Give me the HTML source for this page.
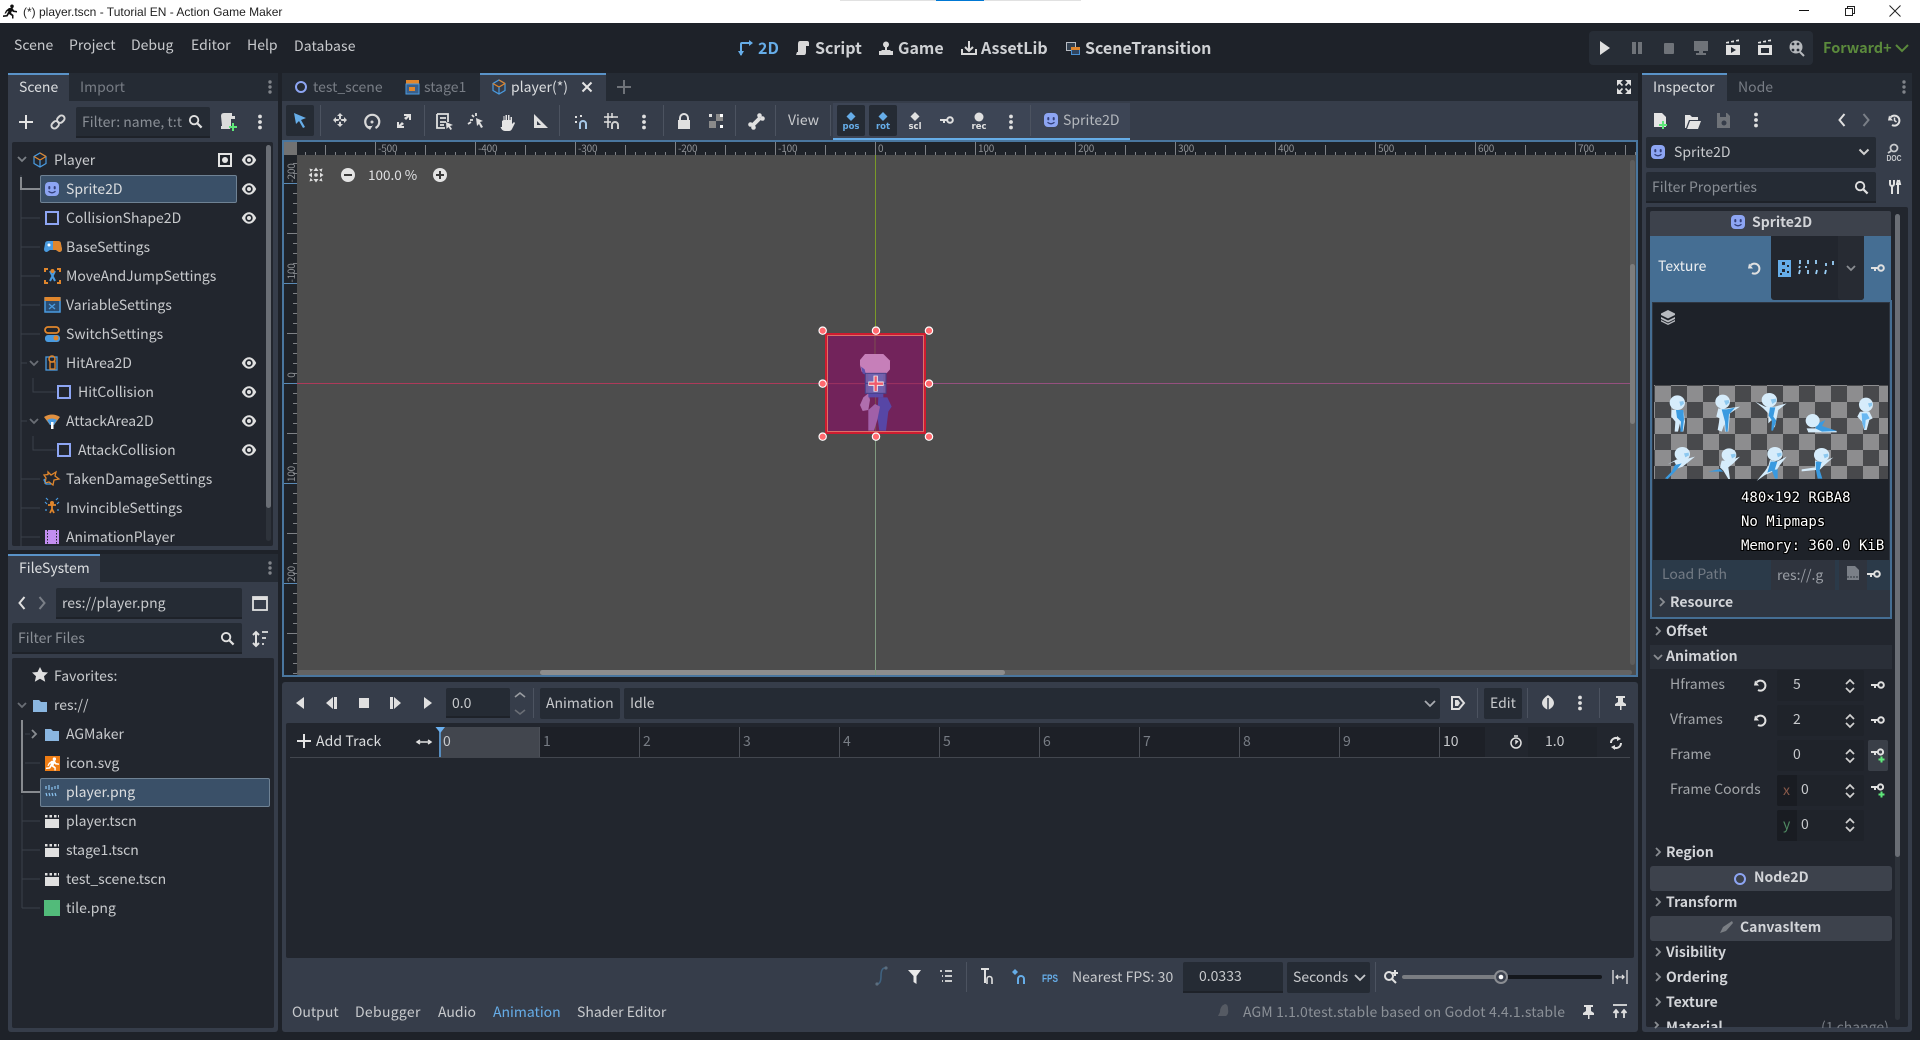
<!DOCTYPE html>
<html><head><meta charset="utf-8"><title>player.tscn - Action Game Maker</title>
<style>
html,body{margin:0;padding:0;background:#1e2229;overflow:hidden}
#r{position:relative;width:1920px;height:1040px;overflow:hidden;background:#1e2229;font-family:"Noto Sans CJK JP","Liberation Sans",sans-serif;font-size:14px;color:#c8cacd}
.b{position:absolute}
.t{position:absolute;white-space:nowrap;line-height:20px;height:20px}
.d{color:#787d85}
.w{color:#dcdee0}
.g{font-weight:700;color:#d2d4d8}
.m{font-weight:700;font-size:16px;color:#cfd1d4}
.rl{position:absolute;top:142px;font-size:10px;line-height:12px;color:#8f9296;white-space:nowrap;letter-spacing:-.2px}
.vl{position:absolute;left:281px;width:20px;text-align:center;font-size:10px;line-height:12px;color:#8f9296;transform:rotate(-90deg);letter-spacing:-.2px}
.i{background:#252b34;border-radius:2px}
.u{background:#252b34;border-bottom:2px solid #1e2229;box-sizing:border-box;border-radius:2px 2px 0 0}
.sep{position:absolute;width:1px;background:#4c5360}
.mono{position:absolute;left:1741px;white-space:nowrap;font-family:"DejaVu Sans Mono","Liberation Mono",monospace;font-size:14px;line-height:20px;color:#fff;text-shadow:1px 0 #000,-1px 0 #000,0 1px #000,0 -1px #000,1px 1px #000,-1px -1px #000,1px -1px #000,-1px 1px #000}
svg{position:absolute;left:0;top:0}
</style></head><body><div id="r">

<!-- title bar -->
<div class="b" style="left:0;top:0;width:1920px;height:23px;background:#fff"></div>
<div class="b" style="left:840px;top:0;width:241px;height:1px;background:#e1e1e1"></div>
<div class="b" style="left:936px;top:0;width:48px;height:1px;background:#0078d4"></div>
<div class="t" style="left:23px;top:2px;font:12px/20px 'Liberation Sans',sans-serif;color:#222">(*) player.tscn - Tutorial EN - Action Game Maker</div>

<!-- menu -->
<div class="t" style="left:14px;top:35px">Scene</div>
<div class="t" style="left:69px;top:35px">Project</div>
<div class="t" style="left:131px;top:35px">Debug</div>
<div class="t" style="left:191px;top:35px">Editor</div>
<div class="t" style="left:247px;top:35px">Help</div>
<div class="t" style="left:294px;top:36px;letter-spacing:.1px">Database</div>

<div class="t m" style="left:758px;top:37px;color:#66ade8">2D</div>
<div class="t m" style="left:815px;top:37px">Script</div>
<div class="t m" style="left:898px;top:37px">Game</div>
<div class="t m" style="left:981px;top:37px">AssetLib</div>
<div class="t m" style="left:1085px;top:37px">SceneTransition</div>

<div class="b" style="left:1589px;top:31px;width:224px;height:34px;background:#272d36;border-radius:4px"></div>
<div class="t" style="left:1823px;top:38px;font-weight:700;font-size:14.5px;color:#5b8a3c">Forward+</div>

<!-- left dock top -->
<div class="b" style="left:8px;top:73px;width:270px;height:28px;background:#252b34"></div>
<div class="b" style="left:8px;top:73px;width:61px;height:28px;background:#363d4a;border-top:2px solid #5a93c8;box-sizing:border-box"></div>
<div class="t w" style="left:19px;top:77px">Scene</div>
<div class="t d" style="left:80px;top:77px">Import</div>
<div class="b" style="left:8px;top:101px;width:270px;height:449px;background:#363d4a"></div>
<div class="b u" style="left:76px;top:107px;width:134px;height:31px"></div>
<div class="t" style="left:82px;top:112px;color:#8a8f96;width:100px;overflow:hidden">Filter: name, t:t</div>
<div class="b" style="left:12px;top:142px;width:261px;height:404px;background:#22262e;border-radius:2px"></div>
<div class="b" style="left:40px;top:175px;width:197px;height:28px;background:#3a5068;border:1px solid #6f8294;box-sizing:border-box;border-radius:2px"></div>
<div class="t" style="left:54px;top:150px">Player</div>
<div class="t w" style="left:66px;top:179px">Sprite2D</div>
<div class="t" style="left:66px;top:208px">CollisionShape2D</div>
<div class="t" style="left:66px;top:237px">BaseSettings</div>
<div class="t" style="left:66px;top:266px;letter-spacing:-.05px">MoveAndJumpSettings</div>
<div class="t" style="left:66px;top:295px">VariableSettings</div>
<div class="t" style="left:66px;top:324px">SwitchSettings</div>
<div class="t" style="left:66px;top:353px">HitArea2D</div>
<div class="t" style="left:78px;top:382px">HitCollision</div>
<div class="t" style="left:66px;top:411px">AttackArea2D</div>
<div class="t" style="left:78px;top:440px">AttackCollision</div>
<div class="t" style="left:66px;top:469px;letter-spacing:.05px">TakenDamageSettings</div>
<div class="t" style="left:66px;top:498px">InvincibleSettings</div>
<div class="t" style="left:66px;top:527px;height:18px;overflow:hidden">AnimationPlayer</div>
<div class="b" style="left:266px;top:145px;width:5px;height:396px;background:#2e333b;border-radius:3px"></div>
<div class="b" style="left:266px;top:145px;width:5px;height:363px;background:#6a6e75;border-radius:3px"></div>

<!-- left dock bottom -->
<div class="b" style="left:8px;top:554px;width:270px;height:28px;background:#252b34"></div>
<div class="b" style="left:8px;top:554px;width:92px;height:28px;background:#363d4a;border-top:2px solid #5a93c8;box-sizing:border-box"></div>
<div class="t w" style="left:19px;top:558px">FileSystem</div>
<div class="b" style="left:8px;top:582px;width:270px;height:450px;background:#363d4a;border-radius:0 0 3px 3px"></div>
<div class="b u" style="left:56px;top:588px;width:186px;height:31px"></div>
<div class="t" style="left:62px;top:593px">res://player.png</div>
<div class="b u" style="left:12px;top:623px;width:230px;height:31px"></div>
<div class="t" style="left:18px;top:628px;color:#8a8f96">Filter Files</div>
<div class="b" style="left:12px;top:658px;width:262px;height:370px;background:#22262e;border-radius:2px"></div>
<div class="b" style="left:40px;top:778px;width:230px;height:29px;background:#3a5068;border:1px solid #6f8294;box-sizing:border-box;border-radius:2px"></div>
<div class="t" style="left:54px;top:666px">Favorites:</div>
<div class="t" style="left:54px;top:695px">res://</div>
<div class="t" style="left:66px;top:724px">AGMaker</div>
<div class="t" style="left:66px;top:753px">icon.svg</div>
<div class="t w" style="left:66px;top:782px">player.png</div>
<div class="t" style="left:66px;top:811px">player.tscn</div>
<div class="t" style="left:66px;top:840px">stage1.tscn</div>
<div class="t" style="left:66px;top:869px">test_scene.tscn</div>
<div class="t" style="left:66px;top:898px">tile.png</div>

<!-- center: tabs -->
<div class="b" style="left:282px;top:73px;width:1356px;height:28px;background:#252b34"></div>
<div class="b" style="left:480px;top:73px;width:126px;height:28px;background:#363d4a;border-top:2px solid #5a93c8;box-sizing:border-box"></div>
<div class="t d" style="left:313px;top:77px">test_scene</div>
<div class="t d" style="left:424px;top:77px">stage1</div>
<div class="t w" style="left:511px;top:77px">player(*)</div>

<!-- 2D toolbar -->
<div class="b" style="left:282px;top:101px;width:1356px;height:41px;background:#363d4a"></div>
<div class="b" style="left:286px;top:105px;width:28px;height:31px;background:#252b34;border-radius:2px"></div>
<div class="sep" style="left:320px;top:105px;height:31px"></div>
<div class="sep" style="left:424px;top:105px;height:31px"></div>
<div class="sep" style="left:559px;top:105px;height:31px"></div>
<div class="sep" style="left:663px;top:105px;height:31px"></div>
<div class="sep" style="left:735px;top:105px;height:31px"></div>
<div class="sep" style="left:775px;top:105px;height:31px"></div>
<div class="t" style="left:788px;top:110px">View</div>
<div class="sep" style="left:830px;top:105px;height:31px"></div>
<div class="b" style="left:833px;top:103px;width:297px;height:35px;background:#3d4555"></div>
<div class="b" style="left:833px;top:138px;width:297px;height:2px;background:#66ade8"></div>
<div class="b" style="left:837px;top:105px;width:28px;height:31px;background:#252b34;border-radius:2px"></div>
<div class="b" style="left:869px;top:105px;width:28px;height:31px;background:#252b34;border-radius:2px"></div>
<div class="sep" style="left:1030px;top:105px;height:31px"></div>
<div class="t" style="left:1063px;top:110px;color:#b4b8bd">Sprite2D</div>

<!-- viewport -->
<div class="b" style="left:282px;top:140px;width:1356px;height:537px;border:2px solid #4a769e;box-sizing:border-box;background:#1f2329"></div>
<div class="b" style="left:284px;top:142px;width:13px;height:13px;background:#727272"></div>
<div class="b" style="left:297px;top:155px;width:1339px;height:520px;background:#4d4d4d"></div>
<div class="b" style="left:297px;top:152px;width:1339px;height:3px;background:linear-gradient(90deg,#7d8085 1px,transparent 1px) 8px 0/10px 100%"></div>
<div class="b" style="left:297px;top:145px;width:1339px;height:10px;background:linear-gradient(90deg,#7d8085 1px,transparent 1px) 28px 0/100px 100%"></div>
<div class="b" style="left:297px;top:142px;width:1339px;height:13px;background:linear-gradient(90deg,#7d8085 1px,transparent 1px) 78px 0/100px 100%"></div>
<div class="b" style="left:293px;top:155px;width:4px;height:520px;background:linear-gradient(#7d8085 1px,transparent 1px) 0 8px/100% 10px"></div>
<div class="b" style="left:287px;top:155px;width:10px;height:520px;background:linear-gradient(#7d8085 1px,transparent 1px) 0 78px/100% 100px"></div>
<div class="b" style="left:284px;top:155px;width:13px;height:520px;background:linear-gradient(#5a8ab5 1px,transparent 1px) 0 28px/100% 100px"></div>
<span class="rl" style="left:378px">-500</span><span class="rl" style="left:478px">-400</span><span class="rl" style="left:578px">-300</span><span class="rl" style="left:678px">-200</span><span class="rl" style="left:778px">-100</span><span class="rl" style="left:878px">0</span><span class="rl" style="left:978px">100</span><span class="rl" style="left:1078px">200</span><span class="rl" style="left:1178px">300</span><span class="rl" style="left:1278px">400</span><span class="rl" style="left:1378px">500</span><span class="rl" style="left:1478px">600</span><span class="rl" style="left:1578px">700</span>
<div class="vl" style="top:167px">-200</div><div class="vl" style="top:267px">-100</div><div class="vl" style="top:369px">0</div><div class="vl" style="top:468px">100</div><div class="vl" style="top:568px">200</div>
<div class="t" style="left:368px;top:164px;color:#dfe0e2;font-size:13.500px">100.0 %</div>
<!-- scrollbars -->
<div class="b" style="left:297px;top:670px;width:1335px;height:5px;background:#636363;border-radius:3px"></div>
<div class="b" style="left:540px;top:670px;width:465px;height:5px;background:#8d8d8d;border-radius:3px"></div>
<div class="b" style="left:1630px;top:160px;width:5px;height:505px;background:#5d5d5d;border-radius:3px"></div>
<div class="b" style="left:1630px;top:264px;width:5px;height:160px;background:#7d7d7d;border-radius:3px"></div>

<!-- bottom panel -->
<div class="b" style="left:282px;top:682px;width:1356px;height:350px;background:#363d4a;border-radius:3px"></div>
<div class="b u" style="left:446px;top:688px;width:64px;height:30px"></div>
<div class="t" style="left:452px;top:693px">0.0</div>
<div class="sep" style="left:533px;top:688px;height:30px"></div>
<div class="b i" style="left:540px;top:688px;width:80px;height:31px"></div>
<div class="t" style="left:546px;top:693px">Animation</div>
<div class="b i" style="left:624px;top:688px;width:816px;height:31px"></div>
<div class="t" style="left:630px;top:693px">Idle</div>
<div class="sep" style="left:1477px;top:688px;height:30px"></div>
<div class="b i" style="left:1484px;top:688px;width:38px;height:31px"></div>
<div class="t" style="left:1490px;top:693px">Edit</div>
<div class="sep" style="left:1527px;top:688px;height:30px"></div>
<div class="sep" style="left:1599px;top:688px;height:30px"></div>

<div class="b" style="left:286px;top:723px;width:1348px;height:235px;background:#22262e;border-radius:2px"></div>
<div class="b" style="left:440px;top:727px;width:1045px;height:30px;background:#1d2027"></div>
<div class="b" style="left:441px;top:727px;width:99px;height:30px;background:#42464e"></div>
<div class="b" style="left:1528px;top:727px;width:69px;height:30px;background:#1f232a"></div>
<div class="b" style="left:290px;top:757px;width:1340px;height:1px;background:#42464e"></div>
<div class="b" style="left:539px;top:727px;width:901px;height:30px;background:linear-gradient(90deg,#4c5058 1px,transparent 1px) 0 0/100px 100%"></div>
<div class="t w" style="left:316px;top:731px;letter-spacing:.1px">Add Track</div>
<div class="t" style="left:443px;top:731px">0</div>
<div class="t d" style="left:543px;top:731px">1</div>
<div class="t d" style="left:643px;top:731px">2</div>
<div class="t d" style="left:743px;top:731px">3</div>
<div class="t d" style="left:843px;top:731px">4</div>
<div class="t d" style="left:943px;top:731px">5</div>
<div class="t d" style="left:1043px;top:731px">6</div>
<div class="t d" style="left:1143px;top:731px">7</div>
<div class="t d" style="left:1243px;top:731px">8</div>
<div class="t d" style="left:1343px;top:731px">9</div>
<div class="t" style="left:1443px;top:731px">10</div>
<div class="t" style="left:1545px;top:731px">1.0</div>

<div class="sep" style="left:966px;top:962px;height:30px"></div>
<div class="t" style="left:1072px;top:967px;letter-spacing:.05px">Nearest FPS: 30</div>
<div class="b u" style="left:1183px;top:962px;width:100px;height:31px"></div>
<div class="t" style="left:1199px;top:966px">0.0333</div>
<div class="b i" style="left:1287px;top:962px;width:83px;height:31px"></div>
<div class="t" style="left:1293px;top:967px">Seconds</div>
<div class="sep" style="left:1375px;top:962px;height:30px"></div>
<div class="b" style="left:1402px;top:975px;width:200px;height:4px;background:#14171c;border-radius:2px"></div>
<div class="b" style="left:1402px;top:975px;width:99px;height:4px;background:#7a7d82;border-radius:2px"></div>

<div class="t" style="left:292px;top:1002px">Output</div>
<div class="t" style="left:355px;top:1002px;letter-spacing:.3px">Debugger</div>
<div class="t" style="left:438px;top:1002px">Audio</div>
<div class="t" style="left:493px;top:1002px;color:#66ade8">Animation</div>
<div class="t" style="left:577px;top:1002px">Shader Editor</div>
<div class="t" style="left:1243px;top:1002px;color:#8b9097;letter-spacing:.15px">AGM 1.1.0test.stable based on Godot 4.4.1.stable</div>

<!-- Right dock -->
<div class="b" style="left:1642px;top:73px;width:270px;height:28px;background:#252b34"></div>
<div class="b" style="left:1642px;top:73px;width:85px;height:28px;background:#363d4a;border-top:2px solid #5a93c8;box-sizing:border-box"></div>
<div class="t w" style="left:1653px;top:77px">Inspector</div>
<div class="t d" style="left:1738px;top:77px">Node</div>
<div class="b" style="left:1642px;top:101px;width:270px;height:931px;background:#363d4a;border-radius:0 0 3px 3px"></div>
<div class="b i" style="left:1646px;top:137px;width:230px;height:31px"></div>
<div class="t" style="left:1674px;top:142px">Sprite2D</div>
<div class="b u" style="left:1646px;top:172px;width:230px;height:31px"></div>
<div class="t" style="left:1652px;top:177px;color:#8a8f96">Filter Properties</div>
<div class="b" style="left:1646px;top:207px;width:262px;height:820px;background:#22262e;border-radius:2px"></div>

<div class="b" style="left:1650px;top:211px;width:241px;height:25px;background:#3d424c;border-radius:2px 2px 0 0"></div>
<div class="t g" style="left:1752px;top:212px">Sprite2D</div>
<div class="b" style="left:1650px;top:236px;width:241px;height:64px;background:#456e93"></div>
<div class="t" style="left:1658px;top:256px;color:#eef0f2">Texture</div>
<div class="b" style="left:1771px;top:236px;width:93px;height:64px;background:#22262e;border-radius:0 0 3px 3px"></div>
<div class="b" style="left:1838px;top:236px;width:26px;height:64px;background:#272b33;border-radius:0 0 3px 3px"></div>

<div class="b" style="left:1650px;top:300px;width:242px;height:319px;border:2px solid #456e93;box-sizing:border-box;background:#2f3641"></div>
<div class="b" style="left:1653px;top:303px;width:236px;height:257px;background:#1e2229"></div>
<div class="b" style="left:1654px;top:385px;width:234px;height:94px;background:conic-gradient(#48494c 25%,#8d8d8f 0 50%,#48494c 0 75%,#8d8d8f 0) 1px 1px/32px 32px"></div>
<div class="mono" style="top:488px">480×192 RGBA8</div>
<div class="mono" style="top:512px">No Mipmaps</div>
<div class="mono" style="top:536px">Memory: 360.0 KiB</div>
<div class="b" style="left:1652px;top:560px;width:238px;height:30px;background:#2b3a49"></div>
<div class="t" style="left:1662px;top:564px;color:#727a84">Load Path</div>
<div class="b" style="left:1771px;top:560px;width:64px;height:30px;background:#2f343e"></div>
<div class="b" style="left:1839px;top:560px;width:28px;height:30px;background:#2f343e"></div>
<div class="t" style="left:1777px;top:565px;color:#9a9ea5">res://.g</div>
<div class="t g" style="left:1670px;top:592px">Resource</div>

<div class="t g" style="left:1666px;top:621px">Offset</div>
<div class="b" style="left:1650px;top:645px;width:242px;height:24px;background:#2a2f38"></div>
<div class="t g" style="left:1666px;top:646px">Animation</div>
<div class="t" style="left:1670px;top:674px;color:#a3a6aa">Hframes</div>
<div class="b i" style="left:1777px;top:670px;width:87px;height:31px;background:#1f232a"></div>
<div class="t" style="left:1793px;top:674px">5</div>
<div class="t" style="left:1670px;top:709px;color:#a3a6aa">Vframes</div>
<div class="b i" style="left:1777px;top:705px;width:87px;height:31px;background:#1f232a"></div>
<div class="t" style="left:1793px;top:709px">2</div>
<div class="t" style="left:1670px;top:744px;color:#a3a6aa">Frame</div>
<div class="b i" style="left:1777px;top:740px;width:87px;height:31px;background:#1f232a"></div>
<div class="t" style="left:1793px;top:744px">0</div>
<div class="b" style="left:1868px;top:740px;width:20px;height:31px;background:#3a3f48;border-radius:2px"></div>
<div class="t" style="left:1670px;top:779px;color:#a3a6aa">Frame Coords</div>
<div class="b i" style="left:1777px;top:775px;width:87px;height:31px;background:#1f232a"></div>
<div class="b" style="left:1777px;top:775px;width:20px;height:31px;background:#191c22;border-radius:2px 0 0 2px"></div>
<div class="t" style="left:1783px;top:780px;color:#8a5a4a">x</div>
<div class="t" style="left:1801px;top:779px">0</div>
<div class="b i" style="left:1777px;top:810px;width:87px;height:31px;background:#1f232a"></div>
<div class="b" style="left:1777px;top:810px;width:20px;height:31px;background:#191c22;border-radius:2px 0 0 2px"></div>
<div class="t" style="left:1783px;top:814px;color:#4f8a62">y</div>
<div class="t" style="left:1801px;top:814px">0</div>
<div class="t g" style="left:1666px;top:842px">Region</div>
<div class="b" style="left:1650px;top:866px;width:242px;height:25px;background:#3d424c;border-radius:3px"></div>
<div class="t g" style="left:1754px;top:867px">Node2D</div>
<div class="t g" style="left:1666px;top:892px">Transform</div>
<div class="b" style="left:1650px;top:916px;width:242px;height:25px;background:#3d424c;border-radius:3px"></div>
<div class="t g" style="left:1740px;top:917px">CanvasItem</div>
<div class="t g" style="left:1666px;top:942px">Visibility</div>
<div class="t g" style="left:1666px;top:967px">Ordering</div>
<div class="t g" style="left:1666px;top:992px">Texture</div>
<div class="t g" style="left:1666px;top:1017px;height:11px;overflow:hidden">Material</div>
<div class="t d" style="left:1821px;top:1017px;height:11px;overflow:hidden">(1 change)</div>
<div class="b" style="left:1895px;top:214px;width:5px;height:806px;background:#2e333b;border-radius:3px"></div>
<div class="b" style="left:1895px;top:214px;width:5px;height:643px;background:#6a6e75;border-radius:3px"></div>

<!-- icons overlay -->
<svg width="1920" height="1040" viewBox="0 0 1920 1040" xmlns="http://www.w3.org/2000/svg">
<defs>
<symbol id="eye" viewBox="0 0 16 16"><path d="M.8 8C3 3.800 5.500 2.300 8 2.300S13 3.800 15.200 8C13 12.200 10.500 13.700 8 13.700S3 12.200.8 8zM8 4.300a3.700 3.700 0 1 0 0 7.400 3.700 3.700 0 0 0 0-7.400z" fill="#e0e0e0" fill-rule="evenodd"/><circle cx="8" cy="8" r="2" fill="#e0e0e0"/></symbol>
<symbol id="spr" viewBox="0 0 16 16"><rect x="1" y="1" width="14" height="14" rx="4" fill="#8da5f3"/><rect x="4.300" y="5" width="2" height="3.400" rx="1" fill="#33407a"/><rect x="9.700" y="5" width="2" height="3.400" rx="1" fill="#33407a"/><path d="M4.500 10.300q3.500 3 7 0" fill="none" stroke="#33407a" stroke-width="1.300"/></symbol>
<symbol id="col" viewBox="0 0 16 16"><rect x="2" y="2" width="12" height="12" fill="none" stroke="#8da5f3" stroke-width="2"/></symbol>
<symbol id="cube" viewBox="0 0 16 16"><path d="M8 1l6 3.500v7L8 15 2 11.500v-7z" fill="none" stroke="#4a9be0" stroke-width="1.200"/><path d="M2 4.500L8 8l6-3.500M8 1l6 3.500" fill="none" stroke="#e0862c" stroke-width="1.200"/><path d="M8 8v7" stroke="#4a9be0" stroke-width="1.200"/></symbol>
<symbol id="key" viewBox="0 0 16 16"><circle cx="11" cy="8" r="2.800" fill="none" stroke="#e0e0e0" stroke-width="2"/><path d="M1 7h7v2H6v2H4V9H1z" fill="#e0e0e0"/></symbol>
<symbol id="keyp" viewBox="0 0 16 16"><circle cx="10.500" cy="5" r="2.600" fill="none" stroke="#e0e0e0" stroke-width="2"/><path d="M1 4h7v2H6v2H4V6H1z" fill="#e0e0e0"/><path d="M10.500 9.500h2v2h2v2h-2v2h-2v-2h-2v-2h2z" fill="#5fe87a"/></symbol>
<symbol id="rev" viewBox="0 0 16 16"><path d="M4.600 5.400A5 5 0 1 1 6 13" fill="none" stroke="#e0e0e0" stroke-width="2"/><path d="M2 8.500h5L3 3.500z" fill="#e0e0e0"/></symbol>
<symbol id="hist" viewBox="0 0 16 16"><path d="M4.600 5.400A5 5 0 1 1 6 13" fill="none" stroke="#e0e0e0" stroke-width="2"/><path d="M2 8.500h5L3 3.500z" fill="#e0e0e0"/><path d="M8.500 5.500V8.500l2 1.500" fill="none" stroke="#e0e0e0" stroke-width="1.500"/></symbol>
<symbol id="ud" viewBox="0 0 16 16"><path d="M4 6l4-4 4 4M4 10l4 4 4-4" fill="none" stroke="#d0d0d0" stroke-width="1.700"/></symbol>
<symbol id="cd" viewBox="0 0 16 16"><path d="M3.500 5.500L8 10l4.500-4.500" fill="none" stroke="#d0d0d0" stroke-width="2"/></symbol>
<symbol id="cr" viewBox="0 0 16 16"><path d="M6 4l4 4-4 4" fill="none" stroke="#8a8d92" stroke-width="1.800"/></symbol>
<symbol id="dots" viewBox="0 0 16 16"><circle cx="8" cy="2.500" r="1.900" fill="#e0e0e0"/><circle cx="8" cy="8" r="1.900" fill="#e0e0e0"/><circle cx="8" cy="13.500" r="1.900" fill="#e0e0e0"/></symbol>
<symbol id="dotsd" viewBox="0 0 16 16"><circle cx="8" cy="3" r="1.700" fill="#80848a"/><circle cx="8" cy="8" r="1.700" fill="#80848a"/><circle cx="8" cy="13" r="1.700" fill="#80848a"/></symbol>
<symbol id="mag" viewBox="0 0 16 16"><circle cx="6.500" cy="6.500" r="4.500" fill="none" stroke="#e0e0e0" stroke-width="2"/><path d="M10 10l4.500 4.500" stroke="#e0e0e0" stroke-width="2.400"/></symbol>
<symbol id="plus" viewBox="0 0 16 16"><path d="M7 1h2v6h6v2H9v6H7V9H1V7h6z" fill="#e4e4e4"/></symbol>
<symbol id="fold" viewBox="0 0 16 16"><path d="M1 2h6l2 2h6v10H1z" fill="#8ab6e0"/></symbol>
<symbol id="clap" viewBox="0 0 16 16"><path d="M1 6h14v9H1z" fill="#e0e0e0"/><path d="M1 2h2.500v2.500H1zM5.500 2H8v2.500H5.500zM10 2h2.500v2.500H10zM14 2h1v2.500h-1z" fill="#e0e0e0"/></symbol>
<symbol id="lt" viewBox="0 0 16 16"><path d="M10.500 2L5.500 8l5 6" fill="none" stroke="#e0e0e0" stroke-width="2"/></symbol>
<symbol id="gt" viewBox="0 0 16 16"><path d="M5.500 2l5 6-5 6" fill="none" stroke="#7a7f87" stroke-width="2"/></symbol>
<symbol id="run" viewBox="0 0 16 16"><path d="M10 1.500a1.800 1.800 0 1 1 0 3.600 1.800 1.800 0 0 1 0-3.600zM7 5h3.500l1.500 2.500 3 .5v1.500l-4-.5-1-1-1 2 2.500 2v3.500H10V13L7 11l-1.500 2.500L1 14v-1.600l3.500-.4L6.500 8 5 8.500 4 10.500H2.500L4 7.500z"/></symbol>
</defs>

<!-- titlebar icons -->
<use href="#run" x="2" y="3" width="16" height="16" fill="#111"/>
<path d="M1799 10.500h10" stroke="#111"/>
<path d="M1845.500 8.500h7v7h-7zM1847.500 8.500v-2h7v7h-2" fill="none" stroke="#222"/>
<path d="M1889.500 5.500l11 11M1900.500 5.500l-11 11" stroke="#222"/>

<!-- workspace icons -->
<path d="M741 55V44q0-1 1-1h8" fill="none" stroke="#66ade8" stroke-width="2"/><path d="M738 51h6l-3 5zM749 40v6l4-3z" fill="#66ade8"/>
<path d="M798 44q0-3 2-3h6v11q0 3-2 3h-8l1-3h1zM806 41h1q2 0 2 2v3h-3z" fill="#d8d8d8"/>
<circle cx="886" cy="44.500" r="3" fill="#d8d8d8"/><path d="M885 46h2v4h3l1 1h2v4h-14v-4h2l1-1h3z" fill="#d8d8d8"/>
<path d="M969 41v9M965 47l4 4 4-4M962 49v5h14v-5" fill="none" stroke="#d8d8d8" stroke-width="2"/>
<rect x="1066.500" y="42.500" width="9" height="8" fill="#32404f" stroke="#b8bcc2"/><rect x="1071.500" y="47.500" width="8" height="7" fill="#30455f" stroke="#4a8fd0"/><rect x="1071" y="47" width="9" height="3" fill="#e0862c"/>

<!-- run bar -->
<path d="M1600 41l10 7-10 7z" fill="#e0e0e0"/>
<path d="M1632 42h4v12h-4zM1638 42h4v12h-4z" fill="#6f7379"/>
<rect x="1664" y="43" width="10" height="11" rx="1" fill="#6f7379"/>
<path d="M1694 41h14v10h-5v2h3v2h-10v-2h3v-2h-5z" fill="#6f7379"/>
<path d="M1726 45h14v10h-14zM1726 42l3-.6v2h-3zM1731 41l3-.6v2h-3zM1736 40l3-.6v2h-3z" fill="#e0e0e0"/><path d="M1731 47l5 3-5 3z" fill="#252b34"/>
<path d="M1758 45h14v10h-14zM1758 42l3-.6v2h-3zM1763 41l3-.6v2h-3zM1768 40l3-.6v2h-3z" fill="#e0e0e0"/><rect x="1761" y="48" width="8" height="5" fill="#252b34"/>
<circle cx="1796" cy="47" r="6.500" fill="#b5b8bc"/><circle cx="1793" cy="44" r="1.400" fill="#252b34"/><circle cx="1798" cy="44" r="1.400" fill="#252b34"/><circle cx="1793" cy="50" r="1.400" fill="#252b34"/><circle cx="1798" cy="50" r="1.400" fill="#252b34"/><path d="M1800 52l4 4" stroke="#b5b8bc" stroke-width="2"/>
<path d="M1896 45l6 6 6-6" fill="none" stroke="#5b8a3c" stroke-width="2"/>

<!-- left dock top -->
<use href="#dotsd" x="262" y="79" width="16" height="16"/>
<use href="#plus" x="18" y="114" width="16" height="16"/>
<g transform="rotate(-45 58 122)" fill="none" stroke="#d6d6d6" stroke-width="2"><rect x="50" y="119" width="8" height="6" rx="3"/><rect x="58" y="119" width="8" height="6" rx="3"/></g>
<use href="#mag" x="188" y="114" width="15" height="15"/>
<path d="M221 116q0-3 3-3h8v3h3v3h-4v7l-1 3h-9v-3h1z" fill="#dcdcdc"/><path d="M232 123h2v3h3v2h-3v3h-2v-3h-3v-2h3z" fill="#5fe87a"/>
<use href="#dots" x="252" y="114" width="16" height="16"/>
<path d="M21 175V547M21 218h19M21 247h19M21 276h19M21 305h19M21 334h19M21 363h6M21 421h6M21 479h19M21 508h19M21 537h19M33 378v14h23M33 436v14h23" stroke="#3b4049" fill="none"/>
<path d="M21 177v12h19" stroke="#878a8f" stroke-width="2" fill="none"/>
<path d="M18 157l4 4 4-4" fill="none" stroke="#7c8086" stroke-width="1.800"/>
<use href="#cube" x="32" y="152" width="16" height="16"/>
<rect x="218" y="153" width="14" height="14" fill="#e4e4e4"/><rect x="220" y="155" width="10" height="10" fill="#1f232a"/><rect x="222" y="157" width="6" height="6" rx="3" fill="#e4e4e4"/>
<use href="#eye" x="241" y="152" width="16" height="16"/>
<use href="#spr" x="44" y="181" width="16" height="16"/>
<use href="#eye" x="241" y="181" width="16" height="16"/>
<use href="#col" x="44" y="210" width="16" height="16"/>
<use href="#eye" x="241" y="210" width="16" height="16"/>
<!-- BaseSettings -->
<path d="M45 244q0-3 3-3h10q3 0 3 3l1 5q0 3-3 3l-3-2h-6l-3 2q-3 0-3-3z" fill="#4a9be0"/><path d="M53 241h5q3 0 3 3l1 5q0 3-3 3l-3-2h-3z" fill="#e0862c"/><circle cx="49" cy="245" r="1.500" fill="#fff"/>
<!-- MoveAndJump -->
<path d="M44 268h4v2h-2v2h-2zM57 268h4v4h-2v-2h-2zM44 284v-4h2v2h2v2zM61 284h-4v-2h2v-2h2z" fill="#e0862c"/><path d="M50 271l5 10M55 271l-5 10" stroke="#4a9be0" stroke-width="2"/><circle cx="52.500" cy="271" r="2" fill="#e0862c"/>
<!-- Variable -->
<rect x="45" y="298" width="15" height="14" fill="#2a4d72" stroke="#4a9be0" stroke-width="1.500"/><rect x="44.500" y="297" width="16" height="4" fill="#e0862c"/><path d="M49 304l6 5M55 304l-6 5" stroke="#4a9be0" stroke-width="1.300"/>
<!-- Switch -->
<rect x="45" y="327" width="14" height="6" rx="3" fill="none" stroke="#e0862c" stroke-width="1.800"/><rect x="45" y="335" width="15" height="7" rx="3" fill="#4a9be0"/><circle cx="56" cy="338" r="2.500" fill="#e0862c"/>
<!-- HitArea -->
<path d="M30 361l4 4 4-4" fill="none" stroke="#6a6e75" stroke-width="1.800"/>
<rect x="46" y="357" width="11" height="13" fill="none" stroke="#4a9be0" stroke-width="1.300"/><circle cx="52" cy="359" r="3" fill="none" stroke="#e0862c" stroke-width="1.500"/><rect x="50" y="362" width="5" height="7" fill="none" stroke="#e0862c" stroke-width="1.300"/>
<use href="#eye" x="241" y="355" width="16" height="16"/>
<use href="#col" x="56" y="384" width="16" height="16"/>
<use href="#eye" x="241" y="384" width="16" height="16"/>
<path d="M30 419l4 4 4-4" fill="none" stroke="#6a6e75" stroke-width="1.800"/>
<path d="M44 417q8-5 16 0l-6 8h-4z" fill="#e09040"/><path d="M47 420q5-3 10 0l-3 5h-4z" fill="#4a9be0"/><rect x="51" y="422" width="2.500" height="7" fill="#fff"/>
<use href="#eye" x="241" y="413" width="16" height="16"/>
<use href="#col" x="56" y="442" width="16" height="16"/>
<use href="#eye" x="241" y="442" width="16" height="16"/>
<path d="M48 472l3 3 5-3-1 4 4 3-5 1-1 5-4-3-4 1 1-5-2-3 4-.5z" fill="none" stroke="#e0862c" stroke-width="1.300"/><path d="M45 479l-1 1 2 4 5 0" stroke="#4a9be0" fill="none" stroke-width="1.300"/>
<circle cx="52" cy="503" r="2" fill="#e0862c"/><path d="M48 505h8M52 505v4l-2 4M52 509l2 4" stroke="#e0862c" stroke-width="1.800" fill="none"/><path d="M45 502l2 2M59 502l-2 2M45 510h2M57 510h2M46 498l2 2M58 498l-2 2" stroke="#4a9be0" stroke-width="1.200"/>
<rect x="45" y="530" width="14" height="14" fill="#c38ef1"/><path d="M47.500 530v14M56.500 530v14" stroke="#22262e" stroke-width="1" stroke-dasharray="1.500 1.500"/>

<!-- file system -->
<use href="#dotsd" x="262" y="560" width="16" height="16"/>
<use href="#lt" x="14" y="595" width="16" height="16"/>
<use href="#gt" x="34" y="595" width="16" height="16"/>
<rect x="253" y="597" width="14" height="13" fill="none" stroke="#e0e0e0" stroke-width="1.800"/><rect x="253" y="597" width="14" height="3" fill="#e0e0e0"/>
<use href="#mag" x="220" y="631" width="15" height="15"/>
<path d="M256 632v14M253 635l3-3 3 3M253 643l3 3 3-3" fill="none" stroke="#e0e0e0" stroke-width="2"/><path d="M262 632h6M262 638h4M262 644h2" stroke="#e0e0e0" stroke-width="1.800"/>
<path d="M40 667l2.500 5 5.500.5-4 3.700 1.200 5.500-5.200-3-5.200 3 1.200-5.500-4-3.700 5.500-.5z" fill="#e0e0e0"/>
<path d="M18 703l4 4 4-4" fill="none" stroke="#6a6e75" stroke-width="1.800"/>
<use href="#fold" x="32" y="698" width="16" height="16"/>
<path d="M22 795V908M22 821h18M22 850h18M22 879h18M22 908h18M25 734h5M25 763h15" stroke="#3b4049" fill="none"/>
<path d="M22 720v72h18" stroke="#878a8f" stroke-width="2" fill="none"/>
<use href="#cr" x="26" y="726" width="16" height="16"/>
<use href="#fold" x="44" y="727" width="16" height="16"/>
<rect x="45" y="756" width="15" height="15" fill="#ef7d14"/>
<use href="#run" x="45" y="756" width="15" height="15" fill="#fff"/>
<path d="M46 786v3M49 785v5M52 787v3M55 786v3M58 785v4M46 793l1 3M49 793l1 3M52 793l1 3M55 793l1 3" stroke="#8cc4f0" stroke-width="1.200"/>
<use href="#clap" x="44" y="813" width="16" height="16"/>
<use href="#clap" x="44" y="842" width="16" height="16"/>
<use href="#clap" x="44" y="871" width="16" height="16"/>
<rect x="44" y="900" width="16" height="16" fill="#52bb7a"/>

<!-- center tabs -->
<circle cx="301" cy="87" r="5" fill="none" stroke="#8da5f3" stroke-width="2"/>
<rect x="406" y="84" width="13" height="10" fill="#3a5f8a" stroke="#4a9be0"/><rect x="406" y="80" width="13" height="3.500" fill="#e0862c"/><rect x="409" y="87" width="6" height="4" fill="#e0862c"/>
<use href="#cube" x="491" y="79" width="16" height="16"/>
<path d="M582.500 82.500l9 9M591.500 82.500l-9 9" stroke="#e4e4e4" stroke-width="2"/>
<path d="M624 80v14M617 87h14" stroke="#6f7379" stroke-width="2"/>
<path d="M1617 80h6l-6 6zM1631 80v6l-6-6zM1617 94v-6l6 6zM1631 94h-6l6-6z" fill="#e0e0e0"/>
<path d="M1619 82l3.500 3.500M1629 82l-3.500 3.500M1619 92l3.500-3.500M1629 92l-3.500-3.500" stroke="#e0e0e0" stroke-width="1.600"/>

<!-- 2D toolbar icons -->
<path d="M294 113l12 5-5 2 4 7-2 1-4-7-3 3z" fill="#66ade8"/>
<path d="M340 113l3 3h-2v3h3v-2l3 3-3 3v-2h-3v3h2l-3 3-3-3h2v-3h-3v2l-3-3 3-3v2h3v-3h-2z" fill="#d8d8d8"/><circle cx="340" cy="120.500" r="1.300" fill="#363d4a"/>
<path d="M369 128a7 7 0 1 1 6.500 0" fill="none" stroke="#d8d8d8" stroke-width="2.200"/><path d="M366 126h7v-1l-3 5z" fill="#d8d8d8"/><circle cx="372" cy="122" r="1.500" fill="#d8d8d8"/>
<path d="M404 114h7v6h-2v-3l-3 3-2-2 3-2h-3zM404 128h-7v-6h2v3l3-3 2 2-3 2h3z" fill="#e0e0e0"/>
<path d="M437 114h11v8M437 114v14h8M440 118h6M440 122h6M440 125h4" fill="none" stroke="#e0e0e0" stroke-width="1.800"/><path d="M446 122l7 3-3 1 2 3-1.500 1-2-3-2 2z" fill="#e0e0e0"/>
<path d="M476 113v3M470 120h3M472 115l2 2M468 124l3-2" stroke="#e0e0e0" stroke-width="1.800"/><path d="M476 118l7 3-3 1 3 5-2 1-2-4-2 2z" fill="#e0e0e0"/>
<path d="M502 127v-6l1.500-1v-4h1v4h1v-5h1.500v5h1v-5h1.500v5h1v-3h1.500v7l2-2 1 1-3 6q-1 2-3 2h-4q-3 0-4.500-4z" fill="#e4e4e4"/>
<path d="M534 114l14 14h-14zM537 121v4h4z" fill="#e0e0e0" fill-rule="evenodd"/>
<path d="M576 116v2M576 121v2M581 115v2" stroke="#e0e0e0" stroke-width="2"/><path d="M580 129v-5a3 3 0 0 1 6 0v5" fill="none" stroke="#a6c8e8" stroke-width="2"/>
<path d="M608 113v15M604 117h14M604 122h7M612 113v5" stroke="#e0e0e0" stroke-width="1.500" fill="none"/><path d="M612 129v-4a3 3 0 0 1 6 0v4" fill="none" stroke="#d0d0d0" stroke-width="2"/>
<use href="#dots" x="636" y="114" width="16" height="16"/>
<path d="M680 121v-3a4 4 0 0 1 8 0v3" fill="none" stroke="#e0e0e0" stroke-width="2"/><rect x="678" y="120" width="12" height="9" fill="#e0e0e0"/>
<rect x="709" y="121" width="7" height="7" fill="#8a8a8a"/><rect x="716" y="114" width="7" height="7" fill="#8a8a8a"/><rect x="709" y="114" width="3" height="3" fill="#e0e0e0"/><rect x="720" y="114" width="3" height="3" fill="#fff"/><rect x="720" y="125" width="3" height="3" fill="#fff"/>
<path d="M752 126l8-8" stroke="#e0e0e0" stroke-width="4"/><circle cx="759.500" cy="115.500" r="2.300" fill="#e0e0e0"/><circle cx="762.500" cy="118.500" r="2.300" fill="#e0e0e0"/><circle cx="750.500" cy="124.500" r="2.300" fill="#e0e0e0"/><circle cx="753.500" cy="127.500" r="2.300" fill="#e0e0e0"/>
<g font-family="DejaVu Sans,sans-serif" font-size="8.500" font-weight="700">
<path d="M851 112l4.500 4.500-4.500 4.500-4.500-4.500z" fill="#66ade8"/><text x="851" y="129" fill="#66ade8" text-anchor="middle">pos</text>
<path d="M883 112l4.500 4.500-4.500 4.500-4.500-4.500z" fill="#66ade8"/><text x="883" y="129" fill="#66ade8" text-anchor="middle">rot</text>
<path d="M915 112l4.500 4.500-4.500 4.500-4.500-4.500z" fill="#e0e0e0"/><text x="915" y="129" fill="#e0e0e0" text-anchor="middle">scl</text>
<circle cx="979" cy="117" r="4.500" fill="#e0e0e0"/><text x="979" y="129" fill="#e0e0e0" text-anchor="middle">rec</text></g>
<use href="#key" x="939" y="112" width="16" height="16"/>
<use href="#dots" x="1003" y="114" width="16" height="16"/>
<use href="#spr" x="1043" y="112" width="16" height="16"/>

<!-- canvas overlay -->
<g fill="#e0e0e0"><path d="M316 167.500l2.500 3.500h-5zM316 182.500l2.500-3.500h-5zM308.500 175l3.500-2.500v5zM323.500 175l-3.500-2.500v5z"/><circle cx="316" cy="175" r="1.800"/><path d="M309.500 168.500l3.500 1-2.500 2.500zM322.500 168.500l-3.500 1 2.500 2.500zM309.500 181.500l3.500-1-2.500-2.500zM322.500 181.500l-3.500-1 2.500-2.500z"/></g>
<circle cx="348" cy="175" r="7" fill="#e4e4e4"/><rect x="344" y="174" width="8" height="2" fill="#3a3a3a"/>
<circle cx="440" cy="175" r="7" fill="#e4e4e4"/><path d="M436 174h3v-3h2v3h3v2h-3v3h-2v-3h-3z" fill="#3a3a3a"/>

<!-- axes -->
<path d="M875.500 155V383" stroke="#7a9a28"/><path d="M875.500 383V675" stroke="#7f9a80"/>
<path d="M297 383.500H875" stroke="#ad3a5a"/><path d="M875 383.500H1630" stroke="#95507f"/>

<!-- sprite -->
<g transform="translate(800 310) scale(.3333)">
<rect x="78" y="72" width="297" height="297" fill="#72235b"/>
<path d="M225 72V190M227 250V369" stroke="#8a8a40" stroke-width="2.500" stroke-opacity=".5"/>
<path d="M78 221H200M258 221H375" stroke="#b03a62" stroke-width="3" stroke-opacity=".7"/>
<path d="M235 262H262L275 290L265 305L258 362H238L232 320Z" fill="#5746a6"/>
<path d="M190 262L205 250L210 270L205 300L188 303L180 285Z" fill="#b06eae"/>
<path d="M205 300L225 282L240 290L232 330L222 362H205Z" fill="#a060a8"/>
<path d="M205 190H250V262H205Z" fill="#5a4aa8"/>
<path d="M195 132H250L270 152V178L258 192H200L185 185L180 165V150Z" fill="#c67fb9"/>
<path d="M183 170L194 178L198 195L188 190Z" fill="#5f50aa"/>
<rect x="196" y="190" width="62" height="60" fill="#7767b0" fill-opacity=".85" stroke="#45408a" stroke-width="3"/><path d="M196 220h62" stroke="#45408a" stroke-width="3"/>
<path d="M227 197v48M205 221h46" stroke="#f4e8e8" stroke-width="13"/><path d="M227 199v44M207 221h42" stroke="#f05a6c" stroke-width="7"/>
<rect x="81" y="75" width="291" height="291" fill="none" stroke="#d8736b" stroke-width="6"/>
<rect x="78" y="72" width="297" height="297" fill="none" stroke="#d01c30" stroke-width="6"/>
<g fill="#ff6a6f" stroke="#fff" stroke-width="3.500"><circle cx="68" cy="62" r="11"/><circle cx="228" cy="62" r="11"/><circle cx="387" cy="62" r="11"/><circle cx="68" cy="221" r="11"/><circle cx="387" cy="221" r="11"/><circle cx="68" cy="380" r="11"/><circle cx="228" cy="380" r="11"/><circle cx="387" cy="380" r="11"/></g>
</g>

<!-- animation toolbar -->
<path d="M304 697l-8 6 8 6z" fill="#e0e0e0"/>
<path d="M333 697l-7 6 7 6zM334 697h3v12h-3z" fill="#e0e0e0"/>
<rect x="359" y="698" width="10" height="10" fill="#e0e0e0"/>
<path d="M390 697h3v12h-3zM394 697l7 6-7 6z" fill="#e0e0e0"/>
<path d="M424 697l8 6-8 6z" fill="#e0e0e0"/>
<path d="M515 697l5-4 5 4" fill="none" stroke="#9a9da2" stroke-width="1.600"/><path d="M515 710l5 4 5-4" fill="none" stroke="#6a6e75" stroke-width="1.600"/>
<path d="M1425 701l5 5 5-5" fill="none" stroke="#a8abb0" stroke-width="1.800"/>
<path d="M1452 697h7l5 6-5 6h-7z" fill="none" stroke="#e0e0e0" stroke-width="2"/><path d="M1455 700h3l2 3-2 3h-3z" fill="#e0e0e0"/>
<path d="M1548 695q-6 4-6 8t6 7q6-3 6-7t-6-8z" fill="#e0e0e0"/><path d="M1548 698v12" stroke="#363d4a" stroke-width="1.500"/>
<use href="#dots" x="1572" y="695" width="16" height="16"/>
<path d="M1616 696h9v2h-2v4l3 2v2h-11v-2l3-2v-4h-2zM1620 706h1.500v4h-1.500z" fill="#e0e0e0"/>
<use href="#plus" x="296" y="733" width="16" height="16"/>
<path d="M418 742h12M420 740l-3 2 3 2M428 740l3 2-3 2" fill="none" stroke="#e0e0e0" stroke-width="1.500"/>
<path d="M440 727v30" stroke="#6ab0f0" stroke-width="1.500"/><path d="M435.500 727h9.500l-4.700 6z" fill="#6ab0f0"/>
<circle cx="1516" cy="743" r="5" fill="none" stroke="#e0e0e0" stroke-width="1.500"/><path d="M1516 740v3l2-2M1514 736h4" stroke="#e0e0e0" stroke-width="1.400" fill="none"/>
<path d="M1611 743a5 5 0 0 1 8-4M1621 743a5 5 0 0 1-8 4" fill="none" stroke="#e0e0e0" stroke-width="2"/><path d="M1617 736l4 3-4 2zM1615 750l-4-3 4-2z" fill="#e0e0e0"/>

<path d="M877 984q4 0 4-8t4-8" fill="none" stroke="#3f6280" stroke-width="1.600"/><circle cx="877" cy="984" r="1.600" fill="#5d6e7e"/><circle cx="886" cy="968" r="1.600" fill="#5d6e7e"/>
<path d="M908 970h13l-4.500 6v8l-3-2v-6z" fill="#eaeaea"/>
<path d="M940 971h2M945 971h7M945 976h7M945 981h7M942 976h1M942 981h1" stroke="#e0e0e0" stroke-width="1.800"/>
<path d="M981 969h8M985 969v14" stroke="#e0e0e0" stroke-width="2"/><path d="M987 984v-5a2.500 2.500 0 0 1 5 0v5" fill="none" stroke="#e0e0e0" stroke-width="1.600"/>
<path d="M1012 972l3-3 3 3-3 3z" fill="#66ade8"/><path d="M1018 984v-5a3 3 0 0 1 6 0v5" fill="none" stroke="#66ade8" stroke-width="2"/>
<text x="1042" y="982" font-family="Liberation Sans,sans-serif" font-size="11" font-weight="700" fill="#66ade8" textLength="16" lengthAdjust="spacingAndGlyphs">FPS</text>
<path d="M1355 975l5 5 5-5" fill="none" stroke="#c8cacd" stroke-width="1.800"/>
<circle cx="1389" cy="976" r="4" fill="none" stroke="#e0e0e0" stroke-width="2"/><path d="M1392 979l4 4" stroke="#e0e0e0" stroke-width="2"/><path d="M1394 970h2v2h2v2h-2v2h-2v-2h-2v-2h2z" fill="#e0e0e0"/>
<circle cx="1501" cy="977" r="6" fill="#3d4350" stroke="#8a8d92" stroke-width="2"/><circle cx="1501" cy="977" r="2.300" fill="#fff"/>
<path d="M1613 970v14M1627 970v14" stroke="#c8cacd" stroke-width="1.500"/><path d="M1616 977h8M1618 975l-2 2 2 2M1622 975l2 2-2 2" fill="none" stroke="#e0e0e0" stroke-width="1.300"/>
<path d="M1225 1004q-5 2-5 8l-2 4h8q3-2 2-7 0-5-3-5z" fill="#555a63"/>
<path d="M1584 1005h9v2h-2v4l3 2v2h-11v-2l3-2v-4h-2zM1588 1015h1.500v4h-1.500z" fill="#e0e0e0"/>
<path d="M1613 1005h14M1616 1018v-8M1613.500 1013l2.500-3 2.500 3M1624 1018v-8M1621.500 1013l2.500-3 2.500 3" fill="none" stroke="#e0e0e0" stroke-width="1.800"/>

<!-- right dock icons -->
<use href="#dotsd" x="1896" y="79" width="16" height="16"/>
<path d="M1654 113h8l4 4v10h-12z" fill="#e4e4e4"/><path d="M1662 121h2v3h3v2h-3v3h-2v-3h-3v-2h3z" fill="#5fe87a"/>
<path d="M1685 115h5l2 2h6v3h-9l-3 8h-1z" fill="#e4e4e4"/><path d="M1690 121h11l-3 8h-11z" fill="#e4e4e4"/>
<path d="M1717 113h10l3 3v12h-13z" fill="#6f7379"/><circle cx="1724" cy="123" r="2.500" fill="#363d4a"/><rect x="1720" y="113" width="6" height="4" fill="#363d4a"/>
<use href="#dots" x="1748" y="112" width="16" height="16"/>
<use href="#lt" x="1834" y="112" width="16" height="16"/>
<use href="#gt" x="1858" y="112" width="16" height="16"/>
<use href="#hist" x="1886" y="112" width="16" height="16"/>
<use href="#spr" x="1650" y="144" width="16" height="16"/>
<use href="#cd" x="1856" y="144" width="16" height="16"/>
<circle cx="1894" cy="148" r="3.500" fill="none" stroke="#c8cacd" stroke-width="1.800"/><path d="M1891 151l-3 2" stroke="#c8cacd" stroke-width="1.800"/>
<text x="1894" y="161" font-family="Liberation Sans,sans-serif" font-size="8.500" font-weight="700" fill="#c8cacd" text-anchor="middle" textLength="15" lengthAdjust="spacingAndGlyphs">DOC</text>
<use href="#mag" x="1854" y="180" width="15" height="15"/>
<path d="M1890 180v4a2 2 0 0 0 4 0v-4M1892 186v8M1898 180l-1 4h3l-1-4M1898 184v10" fill="none" stroke="#e0e0e0" stroke-width="2"/>
<use href="#spr" x="1730" y="214" width="16" height="16"/>
<use href="#rev" x="1746" y="260" width="16" height="16"/>
<path d="M1778 260h13v17h-13z" fill="#66ade8"/><path d="M1782 262h3v3h-3zM1787 265h2v2h-2zM1782 269h3v3h-3zM1787 271h2v2h-2zM1780 273h2v2h-2z" fill="#22262e"/>
<path d="M1800 260v4M1800 266l-1 2M1808 260v4M1806 266v2M1816 260v4M1826 263v3M1833 261v4M1800 270l-1 4M1808 270v4M1817 270l-1 4M1826 270l-1 4" stroke="#9ad0f8" stroke-width="1.800"/>
<path d="M1847 266l4 4 4-4" fill="none" stroke="#8a8d92" stroke-width="1.800"/>
<use href="#key" x="1870" y="260" width="16" height="16"/>

<!-- texture preview -->
<path d="M1668 310l7 3.500v1.500l-7 3.500-7-3.500v-1.500zM1661 317l7 3.500 7-3.500v2l-7 3.500-7-3.500zM1661 320l7 3.500 7-3.500v1.500l-7 3.500-7-3.500z" fill="#b8bbc0"/>
<g transform="translate(1640 290) scale(.3333)">
<!-- figure 1 -->
<path d="M95 360h35l5 35-5 30h-8l-2-25-6 25h-10l2-30-12-15z" fill="#d6ecfb"/><path d="M108 360h22l2 28-4 37h-7l2-30-12-12z" fill="#3a9ae0"/><ellipse cx="112" cy="338" rx="23" ry="22" fill="#d6ecfb"/><path d="M118 335l12-2 2 8-10 8z" fill="#8cc8f0"/>
<!-- figure 2 -->
<path d="M235 355h25l40-5-30 20-5 55h-10l-2-22-8 22-12-5 6-35-10-5z" fill="#d6ecfb"/><path d="M245 358h15l25-5-18 20-4 52h-6l-2-30z" fill="#3a9ae0"/><ellipse cx="248" cy="335" rx="22" ry="21" fill="#d6ecfb"/><path d="M252 332l14-2 2 8-10 8z" fill="#8cc8f0"/>
<!-- figure 3 -->
<path d="M345 335l30 15h30l35-10-25 20-10 50-5 5-5-25-10 10 0-30-15-15z" fill="#d6ecfb"/><path d="M390 352h16l-6 28 9 12-10 30h-5l2-30-10-15z" fill="#3a9ae0"/><ellipse cx="388" cy="330" rx="23" ry="21" fill="#d6ecfb"/><path d="M392 328l16-2 1 8-12 8z" fill="#8cc8f0"/>
<!-- figure 4 -->
<path d="M500 415l30 0 60 8 0 4h-85z" fill="#d6ecfb"/><path d="M530 402l26-12-10 18 45 15-45 2-20-10z" fill="#3a9ae0"/><ellipse cx="518" cy="392" rx="21" ry="20" fill="#d6ecfb"/>
<!-- figure 5 -->
<path d="M660 365l28 0 10 20-10 5-8 30-8 0-6-25-14-15z" fill="#d6ecfb"/><path d="M665 370h16l8 15-12 5-2 30-8-20z" fill="#6ab8f2"/><ellipse cx="678" cy="344" rx="21" ry="21" fill="#d6ecfb"/><path d="M684 340l12-2 1 8-9 6z" fill="#8cc8f0"/>
<!-- row 2 -->
<path d="M110 508h25l30-8-22 18-15 12-15 5-10-20-20 8z" fill="#d6ecfb"/><path d="M105 525l20-5-20 25-22 22-8-2 20-20z" fill="#3a9ae0"/><ellipse cx="127" cy="492" rx="23" ry="21" fill="#d6ecfb"/><path d="M132 490l14-2 1 8-11 6z" fill="#8cc8f0"/>
<path d="M245 512h25l30-12-20 20-15 12 5 35-5 0-15-25-10-10z" fill="#d6ecfb"/><path d="M205 545l35-8 10 8-20 0z" fill="#3a9ae0"/><ellipse cx="267" cy="495" rx="22" ry="20" fill="#d6ecfb"/><path d="M272 493l14-2 1 8-11 6z" fill="#8cc8f0"/>
<path d="M390 510l20 5 30-15-20 25-10 15-35 15-25 18 25-30 10-15z" fill="#d6ecfb"/><path d="M392 515h20l-8 25-22 8z" fill="#3a9ae0"/><path d="M395 540l18-2 0 28-8 0z" fill="#3a9ae0"/><ellipse cx="405" cy="492" rx="23" ry="21" fill="#d6ecfb"/><path d="M410 490l14-2 1 8-11 6z" fill="#8cc8f0"/>
<path d="M525 512l20 5 35-15-25 22-15 15-55 5 0-6 40-6z" fill="#d6ecfb"/><path d="M527 515h18l-6 25 8 26h-14l-5-25z" fill="#3a9ae0"/><ellipse cx="545" cy="495" rx="23" ry="21" fill="#d6ecfb"/><path d="M550 493l14-2 1 8-11 6z" fill="#8cc8f0"/>
</g>
<path d="M1847 566h8l4 4v10h-12z" fill="#7a7f87"/><path d="M1847 577h12" stroke="#2f343e" stroke-dasharray="2 1"/>
<use href="#key" x="1866" y="566" width="16" height="16"/>
<use href="#cr" x="1654" y="594" width="16" height="16"/>
<use href="#cr" x="1650" y="623" width="16" height="16"/>
<path d="M1654 655l4 4 4-4" fill="none" stroke="#8a8d92" stroke-width="1.800"/>
<use href="#rev" x="1752" y="677" width="16" height="16"/>
<use href="#ud" x="1842" y="678" width="16" height="16"/>
<use href="#key" x="1870" y="677" width="16" height="16"/>
<use href="#rev" x="1752" y="712" width="16" height="16"/>
<use href="#ud" x="1842" y="713" width="16" height="16"/>
<use href="#key" x="1870" y="712" width="16" height="16"/>
<use href="#ud" x="1842" y="748" width="16" height="16"/>
<use href="#keyp" x="1870" y="747" width="16" height="16"/>
<use href="#ud" x="1842" y="783" width="16" height="16"/>
<use href="#keyp" x="1870" y="782" width="16" height="16"/>
<use href="#ud" x="1842" y="817" width="16" height="16"/>
<use href="#cr" x="1650" y="844" width="16" height="16"/>
<circle cx="1740" cy="879" r="5" fill="none" stroke="#8da5f3" stroke-width="2"/>
<use href="#cr" x="1650" y="894" width="16" height="16"/>
<path d="M1720 933l3-6 9-6 1 2-7 8z" fill="#7a7e84"/>
<use href="#cr" x="1650" y="944" width="16" height="16"/>
<use href="#cr" x="1650" y="969" width="16" height="16"/>
<use href="#cr" x="1650" y="994" width="16" height="16"/>
<path d="M1655 1022l3 3-3 3" fill="none" stroke="#8a8d92" stroke-width="1.800"/>
</svg>
</div></body></html>
